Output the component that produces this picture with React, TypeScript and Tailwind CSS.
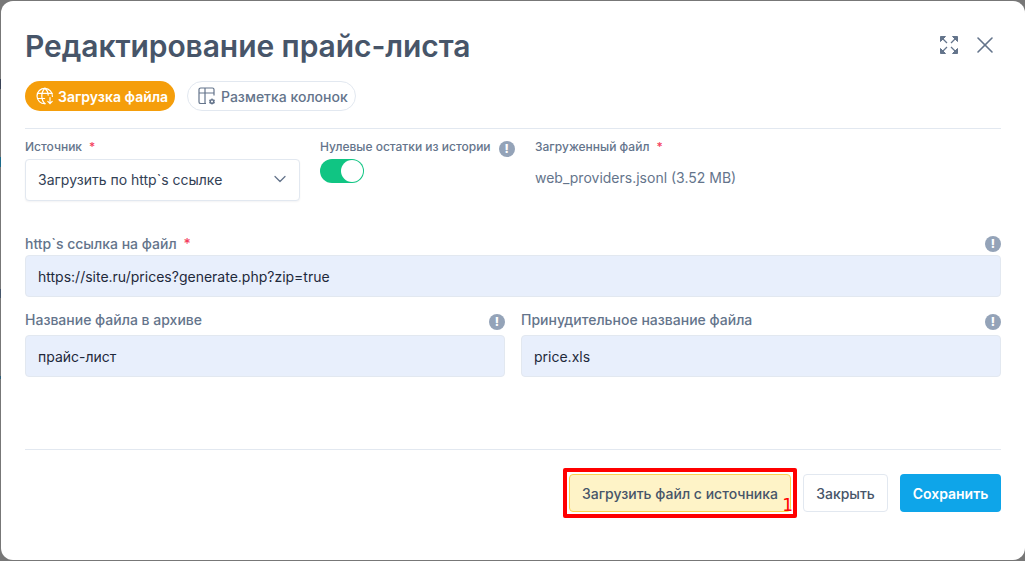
import { ChevronDown, X } from "lucide-react";

function Hint({ className = "" }: { className?: string }) {
  return (
    <span className={`flex h-4 w-4 shrink-0 items-center justify-center rounded-full bg-[#94a3b8] text-[12px] font-extrabold leading-none text-white ${className}`}>
      !
    </span>
  );
}

function Req() {
  return <span className="ml-[7px] text-[#f43f5e]">*</span>;
}

function ExpandIcon() {
  return (
    <svg width="20" height="20" viewBox="0 0 20 20" fill="#64748b" stroke="#64748b" strokeWidth="1.3">
      <path d="M1.500 1.500h5l-5 5zM18.500 1.500h-5l5 5zM1.500 18.500h5l-5-5zM18.500 18.500h-5l5-5z" strokeLinejoin="round" strokeWidth="1" />
      <path d="M3.500 3.500l4.500 4.500M16.500 3.500L12 8M3.500 16.500L8 12M16.500 16.500L12 12" fill="none" />
    </svg>
  );
}

function GlobeIcon() {
  return (
    <svg width="18" height="18" viewBox="0 0 18 18" fill="none" stroke="#fff" strokeWidth="1.2" strokeLinecap="round">
      <path d="M16.400 9.500A7.700 7.700 0 1 0 9 16.700" />
      <path d="M1.600 6.300h14.600M1.600 11.500h7" />
      <path d="M9 1.200C6.600 3.400 5.800 6 5.800 9s.8 5.600 3.200 7.700M9 1.200c2.200 2 3.100 4.400 3.200 7" />
      <path d="M14 10.500v6M11.800 14.400l2.200 2.200 2.200-2.200" />
    </svg>
  );
}

function TableIcon() {
  return (
    <svg width="18" height="18" viewBox="0 0 18 18" fill="none" stroke="#64748b" strokeWidth="1.2">
      <path d="M8 16.500H2.600A1.600 1.600 0 0 1 1 14.900V2.600A1.600 1.600 0 0 1 2.600 1h11.800A1.600 1.600 0 0 1 16 2.600V8.500" />
      <path d="M1 6h15M7 1v15.500" />
      <circle cx="14" cy="14.500" r="1.800" strokeWidth="1.500" />
      <path d="M14 11.400v1.200M14 16.400v1.200M11.300 13l1 .6M15.700 15.400l1 .6M11.300 16l1-.6M15.700 13.600l1-.6" />
    </svg>
  );
}

function TextInput({
  label,
  value,
  req,
  className = "",
  boxClass = "",
  hintClass = "",
}: {
  label: string;
  value: string;
  req?: boolean;
  className?: string;
  boxClass?: string;
  hintClass?: string;
}) {
  return (
    <div className={className}>
      <div className="flex h-[20px] items-center justify-between text-[14px] font-medium leading-none text-[#64748b]">
        <span>
          {label}
          {req && <Req />}
        </span>
        <Hint className={hintClass} />
      </div>
      <div className={`flex h-[42px] items-center rounded-[4px] border border-[#e2e8f0] bg-[#e8effc] px-3 text-[14px] text-[#1e293b] ${boxClass}`}>
        {value}
      </div>
    </div>
  );
}

export default function App() {
  return (
    <div className="flex h-[561px] w-[1025px] overflow-hidden bg-[#777777] pb-px pt-px font-['Inter',sans-serif]">
      {/* page behind the modal shows through on the left edge */}
      <div className="flex w-px shrink-0 flex-col">
        <div className="mt-[78px] h-[10px] bg-[#3a4356]" />
        <div className="mt-[68px] h-[10px] bg-[#1a6a8a]" />
        <div className="mt-[122px] h-[9px] bg-[#46566b]" />
        <div className="mt-[78px] h-[3px] bg-[#2f5f78]" />
      </div>
      <div className="flex flex-1 flex-col rounded-[12px] bg-white px-6">
        <div className="flex h-[80px] items-start justify-between">
          <h1 className="mt-[26px] text-[30px] font-semibold leading-[38px] tracking-[-0.08px] text-[#475569]">Редактирование прайс-листа</h1>
          <div className="mr-[2px] mt-[30px] flex items-center gap-3">
            <ExpandIcon />
            <X className="h-[28px] w-[28px] text-[#64748b]" strokeWidth={1.400} />
          </div>
        </div>

        <div className="flex items-center gap-3">
          <div className="flex h-[30px] w-[150px] items-center gap-[4px] rounded-full bg-[#f59e0b] pl-[11px] text-[14px] font-semibold text-white">
            <GlobeIcon />
            Загрузка файла
          </div>
          <div className="flex h-[30px] w-[169px] items-center gap-[5px] rounded-full border border-[#e2e8f0] pl-[10px] text-[14px] font-medium text-[#64748b]">
            <TableIcon />
            Разметка колонок
          </div>
        </div>

        <div className="mt-[17px] border-t border-[#e2e8f0]" />

        <div className="mt-[8px] flex h-[73px]">
          <div className="w-[275px]">
            <div className="flex h-[20px] items-center text-[12px] font-medium leading-none text-[#64748b]">
              Источник
              <Req />
            </div>
            <div className="mt-[2px] flex h-[42px] items-center justify-between rounded-[4px] border border-[#e2e8f0] bg-white pb-[2px] pl-3 pr-[9px] text-[14px] text-[#334155] shadow-[0_1px_2px_rgba(15,23,42,0.05)]">
              Загрузить по http`s ссылке
              <ChevronDown className="h-5 w-5 text-[#64748b]" strokeWidth={1.500} />
            </div>
          </div>
          <div className="ml-[20px] w-[215px]">
            <div className="flex h-[20px] items-center gap-2 text-[12px] font-medium leading-none text-[#64748b]">
              Нулевые остатки из истории
              <Hint className="mt-[3px]" />
            </div>
            <div className="mt-[2px] flex h-[24px] w-[44px] items-center justify-end rounded-full bg-[#10c583] pr-[1px]">
              <span className="h-[22px] w-[22px] rounded-full bg-white" />
            </div>
          </div>
          <div>
            <div className="flex h-[20px] items-center text-[12px] font-medium leading-none text-[#64748b]">
              Загруженный файл
              <Req />
            </div>
            <div className="mt-[11px] text-[14px] leading-[20px] text-[#64748b]">web_providers.jsonl (3.52 MB)</div>
          </div>
        </div>

        <TextInput className="mt-[24px]" boxClass="mt-px" label="http`s ссылка на файл" value="https://site.ru/prices?generate.php?zip=true" req />

        <div className="mt-[13px] flex gap-4">
          <TextInput className="flex-1" boxClass="mt-[5px]" hintClass="mt-1" label="Название файла в архиве" value="прайс-лист" />
          <TextInput className="flex-1" boxClass="mt-[5px]" hintClass="mt-1" label="Принудительное название файла" value="price.xls" />
        </div>

        <div className="mt-[72px] border-t border-[#e2e8f0]" />

        <div className="mt-[24px] flex justify-end gap-3">
          <div className="relative flex h-[38px] w-[222px] items-center justify-center rounded-[4px] border border-[#fcd34d] bg-[#fef3c7] text-[14px] font-medium text-[#475569]">
            Загрузить файл с источника
            <div className="pointer-events-none absolute -inset-[7px] rounded-[2px] border-[4px] border-[#ff0000]" />
            <span className="absolute bottom-[-4px] right-[-3px] font-['DejaVu_Sans',sans-serif] text-[17px] leading-[20px] text-[#ff0000]">1</span>
          </div>
          <div className="flex h-[38px] w-[85px] items-center justify-center rounded-[4px] border border-[#e2e8f0] bg-white text-[14px] font-medium text-[#475569]">
            Закрыть
          </div>
          <div className="flex h-[38px] w-[101px] items-center justify-center rounded-[4px] bg-[#0ea5e9] text-[14px] font-semibold text-white">
            Сохранить
          </div>
        </div>
      </div>
    </div>
  );
}
